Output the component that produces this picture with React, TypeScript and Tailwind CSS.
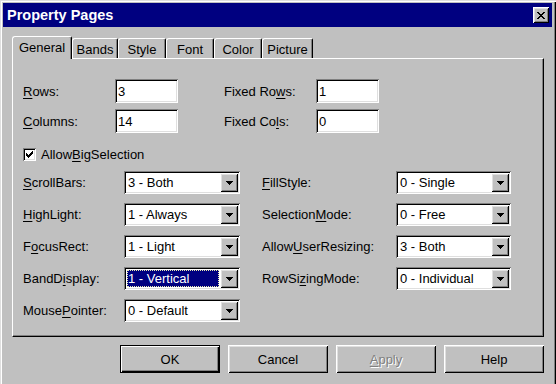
import React from 'react';

const raised =
  'shadow-[inset_1px_1px_#ffffff,inset_-1px_-1px_#000000,inset_2px_2px_#dfdfdf,inset_-2px_-2px_#808080]';
const sunken =
  'shadow-[inset_1px_1px_#808080,inset_-1px_-1px_#ffffff,inset_2px_2px_#000000,inset_-2px_-2px_#dfdfdf]';

const Key: React.FC<{ children: React.ReactNode }> = ({ children }) => (
  <span className="underline decoration-1 underline-offset-[2px]">{children}</span>
);

const TextBox: React.FC<{ value: string }> = ({ value }) => (
  <div className={`w-[63px] h-[24px] bg-white ${sunken} flex items-center pl-[3px]`}>{value}</div>
);

const Arrow = () => (
  <svg width="7" height="4" viewBox="0 0 7 4" shapeRendering="crispEdges">
    <path d="M0 0h7v1H0zM1 1h5v1H1zM2 2h3v1H2zM3 3h1v1H3z" fill="#000" />
  </svg>
);

const Combo: React.FC<{ value: string; width: string; focused?: boolean }> = ({ value, width, focused }) => (
  <div className={`${width} h-[23px] bg-white ${sunken} flex items-stretch p-[2px]`}>
    {focused ? (
      <div className="flex-1 m-[1px] bg-[#000080] text-white flex items-center pl-[1px] outline outline-1 outline-dotted outline-[#e8e8b0] -outline-offset-1">
        {value}
      </div>
    ) : (
      <div className="flex-1 flex items-center pl-[2px]">{value}</div>
    )}
    <div className={`w-[18px] bg-[#c0c0c0] ${raised} flex items-center justify-center`}>
      <Arrow />
    </div>
  </div>
);

const Tab: React.FC<{ label: string; width: string; active?: boolean }> = ({ label, width, active }) =>
  active ? (
    <div
      className={`${width} h-[23px] -mb-[1px] relative z-10 bg-[#c0c0c0] border-t border-l border-white rounded-tl-[3px] rounded-tr-[2px] shadow-[inset_-1px_0_#808080] border-r border-r-black flex items-start justify-center pt-[4px]`}
    >
      {label}
    </div>
  ) : (
    <div
      className={`${width} h-[20px] bg-[#c0c0c0] border-t border-l border-white rounded-tl-[3px] rounded-tr-[2px] border-r border-r-black shadow-[inset_-1px_0_#808080] flex items-start justify-center pt-[4px]`}
    >
      {label}
    </div>
  );

const Button: React.FC<{ children: React.ReactNode; isDefault?: boolean; disabled?: boolean }> = ({
  children,
  isDefault,
  disabled,
}) => (
  <div
    className={`w-[100px] h-[28px] bg-[#c0c0c0] flex items-center justify-center ${
      isDefault
        ? 'border border-black shadow-[inset_1px_1px_#ffffff,inset_-1px_-1px_#000000,inset_-2px_-2px_#808080]'
        : raised
    } ${disabled ? 'text-[#808080] [text-shadow:1px_1px_#ffffff]' : ''}`}
  >
    {children}
  </div>
);

const CheckMark = () => (
  <svg width="7" height="7" viewBox="0 0 7 7" shapeRendering="crispEdges">
    <path
      d="M6 0h1v1H6zM5 1h2v1H5zM0 2h1v1H0zM4 2h3v1H4zM0 3h2v1H0zM3 3h3v1H3zM0 4h5v1H0zM1 5h3v1H1zM2 6h1v1H2z"
      fill="#000"
    />
  </svg>
);

const CloseGlyph = () => (
  <svg width="8" height="7" viewBox="0 0 8 7" shapeRendering="crispEdges">
    <path
      d="M0 0h2v1H0zM6 0h2v1H6zM1 1h2v1H1zM5 1h2v1H5zM2 2h4v1H2zM3 3h2v1H3zM2 4h4v1H2zM1 5h2v1H1zM5 5h2v1H5zM0 6h2v1H0zM6 6h2v1H6z"
      fill="#000"
    />
  </svg>
);

export default function App() {
  const leftCombos: [React.ReactNode, string, boolean?][] = [
    [<><Key>S</Key>crollBars:</>, '3 - Both'],
    [<><Key>H</Key>ighLight:</>, '1 - Always'],
    [<>F<Key>o</Key>cusRect:</>, '1 - Light'],
    [<>BandD<Key>i</Key>splay:</>, '1 - Vertical', true],
    [<>Mouse<Key>P</Key>ointer:</>, '0 - Default'],
  ];
  const rightCombos: [React.ReactNode, string][] = [
    [<><Key>F</Key>illStyle:</>, '0 - Single'],
    [<>Selection<Key>M</Key>ode:</>, '0 - Free'],
    [<>Allow<Key>U</Key>serResizing:</>, '3 - Both'],
    [<>RowSi<Key>z</Key>ingMode:</>, '0 - Individual'],
  ];

  return (
    <div
      className="w-[556px] h-[384px] overflow-hidden bg-[#c0c0c0] text-black text-[13px] leading-none font-['Liberation_Sans',Arial,sans-serif] pt-[3px] pl-[3px] pr-[3px] shadow-[inset_1px_1px_#dfdfdf,inset_2px_2px_#ffffff,inset_-1px_0_#000000,inset_-2px_0_#808080]"
    >
      {/* title bar */}
      <div className="h-[24px] w-[549px] bg-[#000080] flex items-center justify-between pl-[4px] pr-[3px]">
        <span className="text-white font-bold text-[14.5px]">Property Pages</span>
        <div className={`w-[16px] h-[16px] bg-[#c0c0c0] ${raised} flex items-center justify-center`}>
          <CloseGlyph />
        </div>
      </div>

      {/* tabs */}
      <div className="mt-[9px] ml-[9px] h-[22px] flex items-end">
        <Tab label="General" width="w-[60px]" active />
        <Tab label="Bands" width="w-[46px]" />
        <Tab label="Style" width="w-[48px]" />
        <Tab label="Font" width="w-[48px]" />
        <Tab label="Color" width="w-[48px]" />
        <Tab label="Picture" width="w-[51px]" />
      </div>

      {/* panel */}
      <div className="ml-[9px] w-[532px] h-[279px] border-t border-l border-white border-r border-b border-r-black border-b-black shadow-[inset_-1px_-1px_#808080] pt-[20px] pl-[10px]">
        <div className="flex items-center">
          <div className="w-[92px]"><Key>R</Key>ows:</div>
          <TextBox value="3" />
          <div className="w-[92px] ml-[46px]">Fixed Ro<Key>w</Key>s:</div>
          <TextBox value="1" />
        </div>
        <div className="flex items-center mt-[6px]">
          <div className="w-[92px]"><Key>C</Key>olumns:</div>
          <TextBox value="14" />
          <div className="w-[92px] ml-[46px]">Fixed Co<Key>l</Key>s:</div>
          <TextBox value="0" />
        </div>

        <div className="flex items-center gap-[5px] mt-[15px] h-[13px]">
          <div className={`w-[13px] h-[13px] bg-white ${sunken} flex items-center justify-center`}>
            <CheckMark />
          </div>
          <span>Allow<Key>B</Key>igSelection</span>
        </div>

        <div className="flex mt-[10px]">
          <div className="flex flex-col gap-[9px]">
            {leftCombos.map(([label, value, focused], i) => (
              <div key={i} className="flex items-center">
                <div className="w-[101px]">{label}</div>
                <Combo value={value} width="w-[116px]" focused={focused} />
              </div>
            ))}
          </div>
          <div className="flex flex-col gap-[9px] ml-[22px]">
            {rightCombos.map(([label, value], i) => (
              <div key={i} className="flex items-center">
                <div className="w-[134px]">{label}</div>
                <Combo value={value} width="w-[115px]" />
              </div>
            ))}
          </div>
        </div>
      </div>

      {/* buttons */}
      <div className="mt-[8px] w-[541px] flex justify-end gap-[8px]">
        <Button isDefault>OK</Button>
        <Button>Cancel</Button>
        <Button disabled>
          <Key>A</Key>pply
        </Button>
        <Button>Help</Button>
      </div>
    </div>
  );
}
